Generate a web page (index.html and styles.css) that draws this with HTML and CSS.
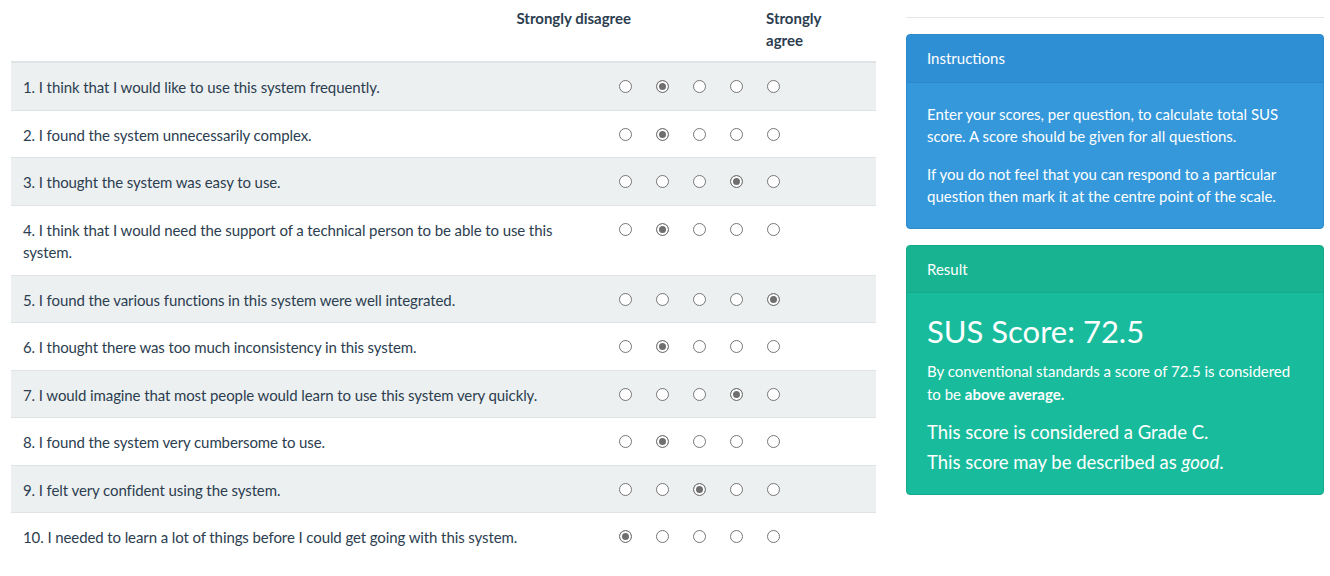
FILE: index.html
```html
<!DOCTYPE html>
<html lang="en">
<head>
<meta charset="utf-8">
<title>SUS Calculator</title>
<link rel="stylesheet" href="styles.css">
</head>
<body>
<div class="page">
  <div class="left">
    <table class="sus">
      <colgroup>
        <col class="c-q"><col class="c-r"><col class="c-r"><col class="c-r"><col class="c-r"><col class="c-r"><col class="c-f">
      </colgroup>
      <thead>
        <tr>
          <th colspan="2" class="h-dis">Strongly disagree</th>
          <th colspan="3"></th>
          <th colspan="2" class="h-agr"><span class="agr">Strongly agree</span></th>
        </tr>
      </thead>
      <tbody>
        <tr><td class="q">1. I think that I would like to use this system frequently.</td>
          <td><input type="radio" name="q1"></td><td><input type="radio" name="q1" checked></td><td><input type="radio" name="q1"></td><td><input type="radio" name="q1"></td><td><input type="radio" name="q1"></td><td></td></tr>
        <tr><td class="q">2. I found the system unnecessarily complex.</td>
          <td><input type="radio" name="q2"></td><td><input type="radio" name="q2" checked></td><td><input type="radio" name="q2"></td><td><input type="radio" name="q2"></td><td><input type="radio" name="q2"></td><td></td></tr>
        <tr><td class="q">3. I thought the system was easy to use.</td>
          <td><input type="radio" name="q3"></td><td><input type="radio" name="q3"></td><td><input type="radio" name="q3"></td><td><input type="radio" name="q3" checked></td><td><input type="radio" name="q3"></td><td></td></tr>
        <tr><td class="q">4. I think that I would need the support of a technical person to be able to use this system.</td>
          <td><input type="radio" name="q4"></td><td><input type="radio" name="q4" checked></td><td><input type="radio" name="q4"></td><td><input type="radio" name="q4"></td><td><input type="radio" name="q4"></td><td></td></tr>
        <tr><td class="q">5. I found the various functions in this system were well integrated.</td>
          <td><input type="radio" name="q5"></td><td><input type="radio" name="q5"></td><td><input type="radio" name="q5"></td><td><input type="radio" name="q5"></td><td><input type="radio" name="q5" checked></td><td></td></tr>
        <tr><td class="q">6. I thought there was too much inconsistency in this system.</td>
          <td><input type="radio" name="q6"></td><td><input type="radio" name="q6" checked></td><td><input type="radio" name="q6"></td><td><input type="radio" name="q6"></td><td><input type="radio" name="q6"></td><td></td></tr>
        <tr><td class="q">7. I would imagine that most people would learn to use this system very quickly.</td>
          <td><input type="radio" name="q7"></td><td><input type="radio" name="q7"></td><td><input type="radio" name="q7"></td><td><input type="radio" name="q7" checked></td><td><input type="radio" name="q7"></td><td></td></tr>
        <tr><td class="q">8. I found the system very cumbersome to use.</td>
          <td><input type="radio" name="q8"></td><td><input type="radio" name="q8" checked></td><td><input type="radio" name="q8"></td><td><input type="radio" name="q8"></td><td><input type="radio" name="q8"></td><td></td></tr>
        <tr><td class="q">9. I felt very confident using the system.</td>
          <td><input type="radio" name="q9"></td><td><input type="radio" name="q9"></td><td><input type="radio" name="q9" checked></td><td><input type="radio" name="q9"></td><td><input type="radio" name="q9"></td><td></td></tr>
        <tr><td class="q">10. I needed to learn a lot of things before I could get going with this system.</td>
          <td><input type="radio" name="q10" checked></td><td><input type="radio" name="q10"></td><td><input type="radio" name="q10"></td><td><input type="radio" name="q10"></td><td><input type="radio" name="q10"></td><td></td></tr>
      </tbody>
    </table>
  </div>
  <div class="right">
    <hr class="rule">
    <div class="panel panel-info">
      <div class="panel-heading">Instructions</div>
      <div class="panel-body">
        <p>Enter your scores, per question, to calculate total SUS score. A score should be given for all questions.</p>
        <p>If you do not feel that you can respond to a particular question then mark it at the centre point of the scale.</p>
      </div>
    </div>
    <div class="panel panel-success">
      <div class="panel-heading">Result</div>
      <div class="panel-body">
        <h2 class="score">SUS Score: 72.5</h2>
        <p class="std">By conventional standards a score of 72.5 is considered to be <strong>above average.</strong></p>
        <p class="grade">This score is considered a Grade C.</p>
        <p class="grade">This score may be described as <em>good</em>.</p>
      </div>
    </div>
  </div>
</div>
</body>
</html>
```
FILE: styles.css
```css
* { box-sizing: border-box; }
html, body { margin: 0; padding: 0; background: #fff; }
body {
  font-family: Lato, "Open Sans", "Liberation Sans", sans-serif;
  font-size: 15px;
  line-height: 1.5;
  color: #2c3e50;
}
.page {
  display: flex;
  gap: 30px;
  padding-left: 11px;
  align-items: flex-start;
}
.left { width: 865px; flex: none; }
.right { width: 418px; flex: none; }

.sus {
  width: 865px;
  border-collapse: collapse;
  table-layout: fixed;
}
.c-q { width: 595px; }
.c-r { width: 37px; }
.c-f { width: 85px; }

.sus th {
  font-weight: 700;
  vertical-align: top;
  line-height: 22px;
  padding: 7px 12px 10px 12px;
  text-align: left;
  border-bottom: 2px solid #dfe3e5;
}
.sus th.h-dis { text-align: right; }
.sus .agr { display: block; width: 70px; }
.sus td {
  vertical-align: top;
  padding: 12px 12px;
  border-top: 1px solid #dfe3e5;
}
.sus td.q { letter-spacing: -0.1px; padding-top: 13px; padding-bottom: 11px; }
.sus tbody tr:first-child td { border-top: none; }
.sus tbody tr:nth-child(odd) td { background: #ecf0f1; }

.sus input[type="radio"] {
  -webkit-appearance: none;
  appearance: none;
  display: block;
  width: 13px;
  height: 13px;
  margin: 5px 0 0 1px;
  border: 1px solid #767676;
  border-radius: 50%;
  background: #fff;
}
.sus input[type="radio"]:checked {
  background: #6f6f6f;
  box-shadow: inset 0 0 0 2px #fff;
}

.rule {
  border: 0;
  border-top: 1px solid #e6e6e6;
  margin: 17px 0 16px 0;
}

.panel {
  border: 1px solid;
  border-radius: 4px;
  color: #fff;
  margin-bottom: 16px;
}
.panel-heading {
  padding: 12px 20px;
  border-bottom: 1px solid;
  border-radius: 3px 3px 0 0;
}
.panel-body { padding: 20px 20px 20px 20px; }
.panel-body p { margin: 0 0 15px 0; }
.panel-body p:last-child { margin-bottom: 0; }

.panel-info { border-color: #2d8acb; background: #3498db; }
.panel-info .panel-heading { background: #2f8fd5; border-color: #2c86c7; }

.panel-success { border-color: #17a98b; background: #18bc9c; }
.panel-success .panel-heading { background: #18b492; border-color: #17a98b; }
.panel-success .panel-body { padding-top: 21px; padding-bottom: 17px; }

.score {
  font-weight: 400;
  font-size: 31px;
  line-height: 1.1;
  margin: 0 0 12px 0;
}
.panel-body p.std { margin-bottom: 12px; }
.panel-body p.grade {
  font-size: 18.5px;
  line-height: 30px;
  margin: 0;
}
```
